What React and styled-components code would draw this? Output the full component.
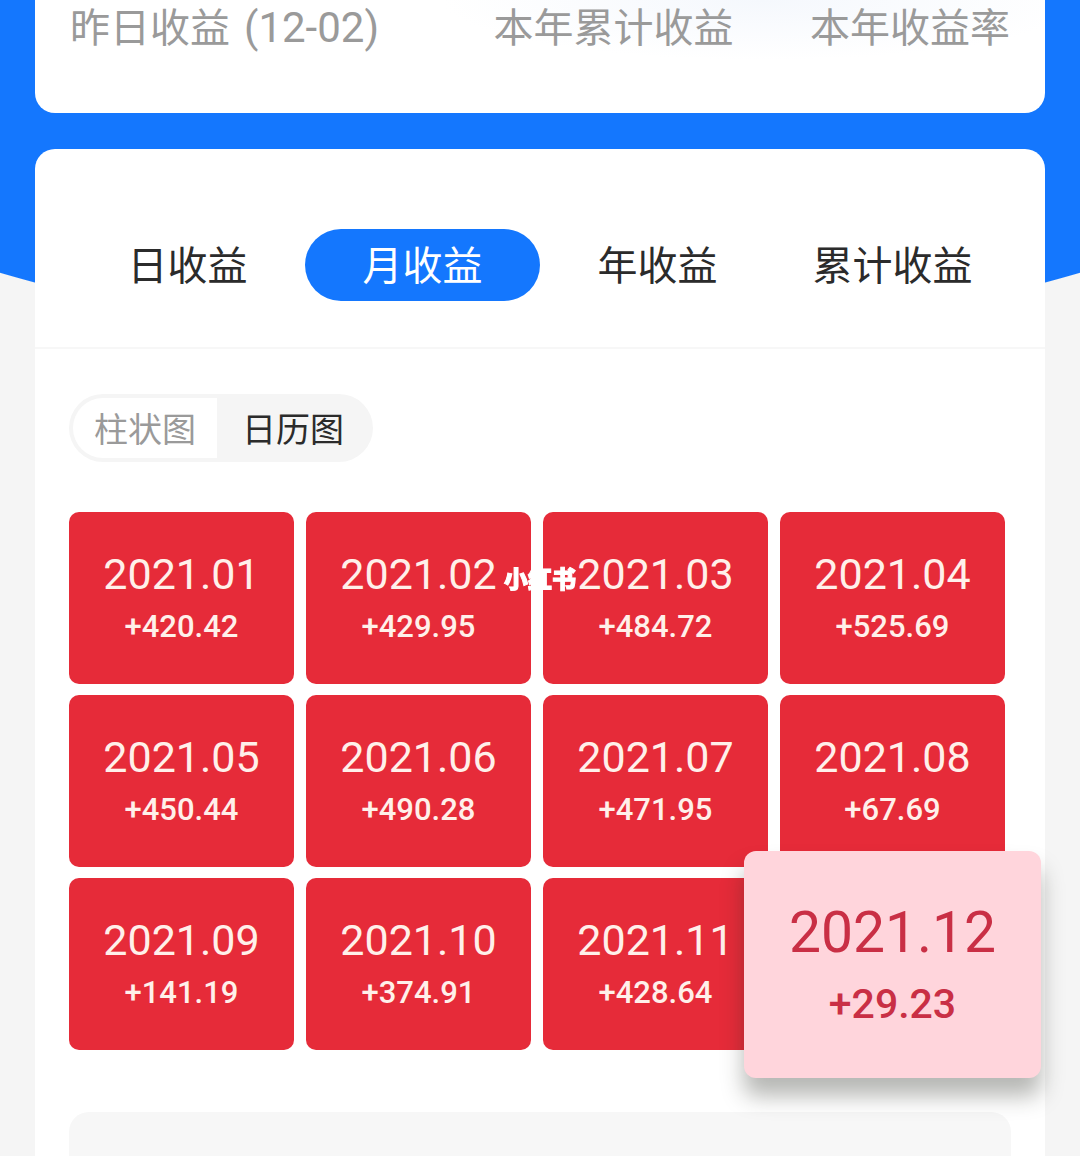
import React, { useState } from "react";
import styled, { createGlobalStyle } from "styled-components";

const GlobalStyle = createGlobalStyle`
  * { box-sizing: border-box; }
  body {
    margin: 0;
    background: #f5f5f5;
    font-family: Roboto, "Noto Sans CJK SC", sans-serif;
  }
  button {
    margin: 0;
    padding: 0;
    border: 0;
    background: none;
    font: inherit;
    cursor: pointer;
  }
`;

const Page = styled.div`
  display: flex;
  flex-direction: column;
  gap: 36px;
  min-height: 100vh;
  padding: 0 35px;
  background: radial-gradient(circle 1939px at 50% -1589px, #1477fe 1938px, #f5f5f5 1939px);
`;

const Summary = styled.section`
  display: grid;
  grid-template-columns: 424fr 317fr 200fr;
  padding: 0 35px 56px;
  border-radius: 0 0 20px 20px;
  background: radial-gradient(ellipse 320px 60px at 72% 0, #f5f8fd, #fff);
`;

const SummaryLabel = styled.span`
  color: #9a9a9a;
  font-size: 40px;
  line-height: 57px;
  white-space: nowrap;
`;

const SummaryDate = styled.span`
  margin-left: 14px;
  font-size: 42px;
  line-height: 1;
`;

const Card = styled.main`
  display: flex;
  flex: 1;
  flex-direction: column;
  border-radius: 20px 20px 0 0;
  background: #fff;
`;

const Tabs = styled.nav`
  display: grid;
  grid-template-columns: repeat(4, 1fr);
  padding: 80px 35px 46px;
  border-bottom: 2px solid #f7f7f7;
`;

const Tab = styled.button`
  height: 72px;
  padding-top: 4px;
  border-radius: 36px;
  background: ${(p) => (p.$active ? "#1477fe" : "transparent")};
  color: ${(p) => (p.$active ? "#fff" : "#2b2b2b")};
  font-size: 40px;
  line-height: 68px;
`;

const Body = styled.div`
  display: flex;
  flex: 1;
  flex-direction: column;
  padding: 45px 34px 0;
`;

const Switch = styled.div`
  display: flex;
  align-self: flex-start;
  padding: 4px;
  border-radius: 34px;
  background: #f5f5f5;
`;

const SwitchButton = styled.button`
  width: ${(p) => (p.$side === "left" ? 144 : 152)}px;
  height: 60px;
  padding-top: 4px;
  border-radius: ${(p) => (p.$side === "left" ? "30px 0 0 30px" : "0 30px 30px 0")};
  background: ${(p) => (p.$active ? "transparent" : "#fff")};
  color: ${(p) => (p.$active ? "#2b2b2b" : "#9a9a9a")};
  font-size: 34px;
  line-height: 56px;
`;

const Months = styled.div`
  display: grid;
  grid-template-columns: repeat(4, 1fr);
  gap: 11px 12px;
  margin: 50px 6px 62px 0;
`;

const Cell = styled.div`
  position: relative;
  height: 172px;
`;

const Tile = styled.button`
  display: flex;
  flex-direction: column;
  align-items: center;
  justify-content: center;
  width: 100%;
  height: 100%;
  padding-bottom: 2px;
  border-radius: 10px;
  background: #e62b39;
  color: #fff0ea;
`;

const RaisedTile = styled(Tile)`
  position: absolute;
  inset: -27px -36px -28px;
  z-index: 1;
  width: auto;
  height: auto;
  padding-bottom: 0;
  border-radius: 12px;
  background: #ffd5dc;
  color: #c92f45;
  box-shadow: 0 18px 22px rgba(40, 44, 36, 0.34);
`;

const Month = styled.span`
  font-size: ${(p) => (p.$large ? 57 : 43)}px;
  line-height: ${(p) => (p.$large ? 78 : 60)}px;
`;

const Amount = styled.span`
  font-size: ${(p) => (p.$large ? 41 : 31)}px;
  font-weight: 500;
  line-height: ${(p) => (p.$large ? 64 : 46)}px;
`;

const Details = styled.section`
  flex: 1;
  min-height: 44px;
  border-radius: 20px 20px 0 0;
  background: #f7f7f7;
`;

const Watermark = styled.span`
  position: fixed;
  top: 50%;
  left: 50%;
  z-index: 2;
  transform: translate(-50%, -50%);
  color: #fff;
  font-family: "Noto Sans CJK SC", sans-serif;
  font-size: 24px;
  font-weight: 900;
  line-height: 28px;
  white-space: nowrap;
  -webkit-text-stroke: 1px #fff;
  pointer-events: none;
`;

const tabs = ["日收益", "月收益", "年收益", "累计收益"];
const months = [
  ["2021.01", "+420.42"],
  ["2021.02", "+429.95"],
  ["2021.03", "+484.72"],
  ["2021.04", "+525.69"],
  ["2021.05", "+450.44"],
  ["2021.06", "+490.28"],
  ["2021.07", "+471.95"],
  ["2021.08", "+67.69"],
  ["2021.09", "+141.19"],
  ["2021.10", "+374.91"],
  ["2021.11", "+428.64"],
  ["2021.12", "+29.23"],
];

export default function App() {
  const [tab, setTab] = useState("月收益");
  const [view, setView] = useState("日历图");
  const [selected, setSelected] = useState("2021.12");

  return (
    <>
      <GlobalStyle />
      <Page>
        <Summary>
          <SummaryLabel>
            昨日收益
            <SummaryDate>(12-02)</SummaryDate>
          </SummaryLabel>
          <SummaryLabel>本年累计收益</SummaryLabel>
          <SummaryLabel>本年收益率</SummaryLabel>
        </Summary>
        <Card>
          <Tabs>
            {tabs.map((name) => (
              <Tab key={name} $active={tab === name} onClick={() => setTab(name)}>
                {name}
              </Tab>
            ))}
          </Tabs>
          <Body>
            <Switch>
              <SwitchButton
                $side="left"
                $active={view === "柱状图"}
                onClick={() => setView("柱状图")}
              >
                柱状图
              </SwitchButton>
              <SwitchButton
                $side="right"
                $active={view === "日历图"}
                onClick={() => setView("日历图")}
              >
                日历图
              </SwitchButton>
            </Switch>
            <Months>
              {months.map(([month, amount]) => {
                const large = month === selected;
                const Box = large ? RaisedTile : Tile;
                return (
                  <Cell key={month}>
                    <Box onClick={() => setSelected(month)}>
                      <Month $large={large}>{month}</Month>
                      <Amount $large={large}>{amount}</Amount>
                    </Box>
                  </Cell>
                );
              })}
            </Months>
            <Details />
          </Body>
        </Card>
      </Page>
      <Watermark>小红书</Watermark>
    </>
  );
}
